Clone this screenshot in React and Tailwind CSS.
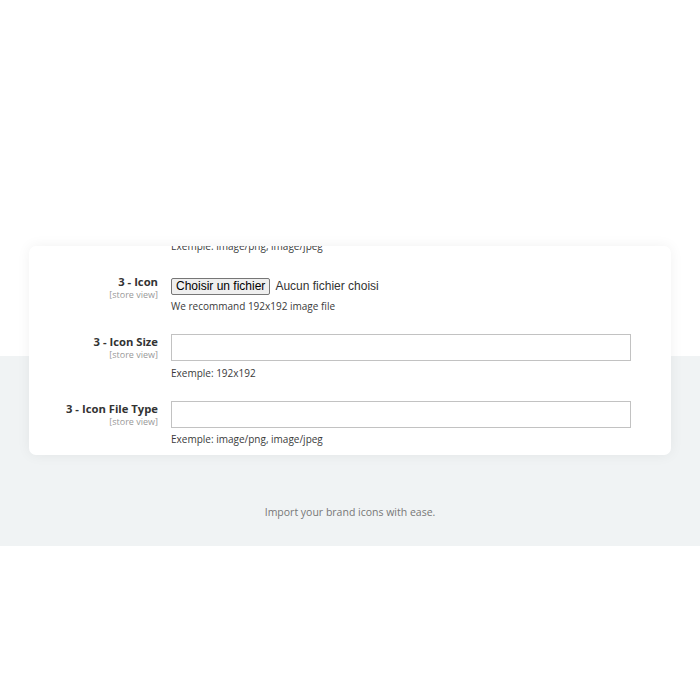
import React from "react";

const Label = ({ title, scope = "[store view]", className = "" }) => (
  <div className={`w-[129px] shrink-0 text-right ${className}`}>
    <div className="text-[11.25px] leading-[14px] font-bold text-[#333]">{title}</div>
    <div className="text-[9px] leading-[12px] text-[#999]">{scope}</div>
  </div>
);

const Hint = ({ children, className = "" }) => (
  <div className={`text-[10px] leading-[14px] text-[#3a3a3a] ${className}`}>{children}</div>
);

const App = () => {
  return (
    <main className="min-h-[700px] bg-white font-['Open_Sans',sans-serif]">
      <section className="relative z-10 px-[29px] pt-[246px]">
        <div className="overflow-hidden rounded-[7px] bg-white pr-[40px] pb-[9px] shadow-[0_0_14px_rgba(0,0,0,0.06)]">
          <div className="-mt-[7px] pl-[142px]">
            <Hint>Exemple: image/png, image/jpeg</Hint>
          </div>

          {/* 3 - Icon */}
          <div className="mt-[22px] flex items-start gap-[13px]">
            <Label title="3 - Icon" />
            <div className="flex-1 pt-[2px]">
              <div className="flex items-center gap-[5px] font-['Liberation_Sans',Arial,sans-serif] text-[12px] text-[#333]">
                <button className="h-[17px] rounded-[2px] border border-[#767676] bg-[#efefef] px-[4px] leading-[15px] text-black">
                  Choisir un fichier
                </button>
                <span>Aucun fichier choisi</span>
              </div>
              <Hint className="mt-[4px]">We recommand 192x192 image file</Hint>
            </div>
          </div>

          {/* 3 - Icon Size */}
          <div className="mt-[21px] flex items-start gap-[13px]">
            <Label title="3 - Icon Size" className="mt-[1px]" />
            <div className="flex-1">
              <input
                type="text"
                className="block h-[27px] w-full border border-[#c2c2c2] bg-white px-2 text-[12px] outline-none"
              />
              <Hint className="mt-[5px]">Exemple: 192x192</Hint>
            </div>
          </div>

          {/* 3 - Icon File Type */}
          <div className="mt-[21px] flex items-start gap-[13px]">
            <Label title="3 - Icon File Type" className="mt-[1px]" />
            <div className="flex-1">
              <input
                type="text"
                className="block h-[27px] w-full border border-[#c2c2c2] bg-white px-2 text-[12px] outline-none"
              />
              <Hint className="mt-[4px]">Exemple: image/png, image/jpeg</Hint>
            </div>
          </div>
        </div>
      </section>

      <section className="-mt-[99px] flex h-[190px] flex-col justify-end bg-[#f0f3f4] pb-[26px]">
        <p className="text-center text-[10.5px] leading-[16px] text-[#777]">
          Import your brand icons with ease.
        </p>
      </section>
    </main>
  );
};

export default App;
